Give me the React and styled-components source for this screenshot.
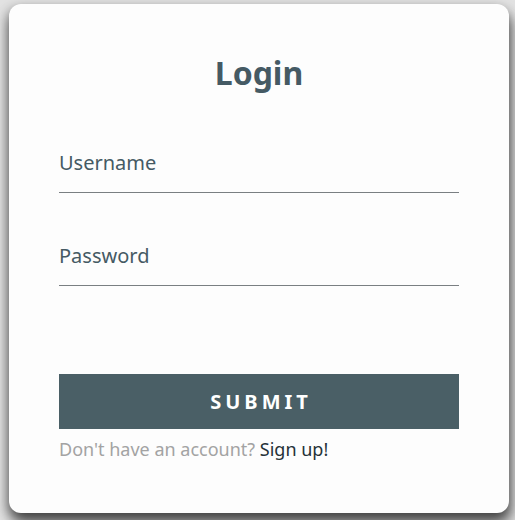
import styled, { createGlobalStyle } from 'styled-components';

const GlobalStyle = createGlobalStyle`
  html, body {
    margin: 0;
    padding: 0;
    background: #e2e2e2;
    font-family: "Noto Sans", "Open Sans", sans-serif;
  }
  body {
    width: 515px;
    height: 520px;
    overflow: hidden;
  }
`;

const Page = styled.div`
  padding: 4px 0 0 9px;
`;

const Card = styled.form`
  box-sizing: border-box;
  width: 500px;
  height: 509px;
  padding: 49px 50px 0;
  background: #fdfdfd;
  border-radius: 12px;
  box-shadow: 2px 10px 14px rgba(0, 0, 0, 0.6), -2px 4px 12px rgba(0, 0, 0, 0.3);
  display: flex;
  flex-direction: column;
`;

const Title = styled.h1`
  margin: 0 0 50px;
  text-align: center;
  font-size: 32px;
  font-weight: 700;
  line-height: 40px;
  color: #455a64;
`;

const Input = styled.input`
  box-sizing: border-box;
  width: 100%;
  height: 50px;
  padding: 0 0 10px;
  margin-top: ${(p) => p.$gap}px;
  border: none;
  border-bottom: 1px solid #7a7f82;
  background: transparent;
  font-family: inherit;
  font-size: 20px;
  color: #455a64;
  outline: none;

  &::placeholder {
    color: #455a64;
  }
`;

const Button = styled.button`
  margin-top: 88px;
  height: 55px;
  border: none;
  background: #4a5f66;
  color: #ffffff;
  font-family: inherit;
  font-size: 20px;
  font-weight: 700;
  letter-spacing: 4px;
  text-indent: 4px;
  cursor: pointer;
`;

const Footer = styled.p`
  margin: 8px 0 0;
  font-size: 18px;
  color: #a3a3a3;
`;

const SignUp = styled.a`
  color: #263238;
  text-decoration: none;
`;

export default function App() {
  return (
    <>
      <GlobalStyle />
      <Page>
        <Card onSubmit={(e) => e.preventDefault()}>
          <Title>Login</Title>
          <Input $gap={0} type="text" placeholder="Username" />
          <Input $gap={43} type="password" placeholder="Password" />
          <Button type="submit">SUBMIT</Button>
          <Footer>
            Don't have an account? <SignUp href="#">Sign up!</SignUp>
          </Footer>
        </Card>
      </Page>
    </>
  );
}
